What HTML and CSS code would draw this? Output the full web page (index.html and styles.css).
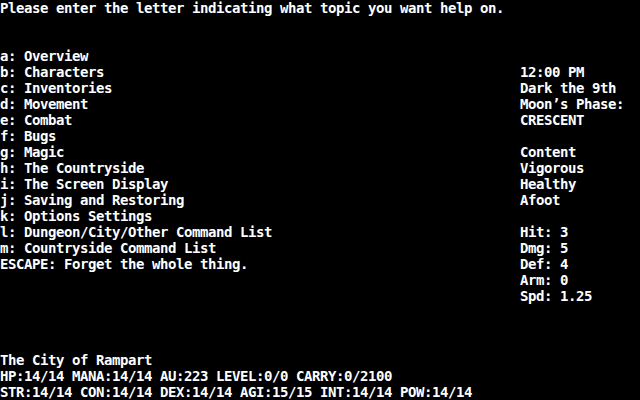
FILE: index.html
```html
<!DOCTYPE html>
<html>
<head>
    <title>Help</title>
    <meta charset="utf-8">
    <link rel="stylesheet" href="styles.css">
</head>
<body>
<div class="screen">
    <div class="line">Please enter the letter indicating what topic you want help on.</div>
    <div class="line"></div>
    <div class="line"></div>

    <div class="middle">
        <div class="menu">
            <div class="line">a: Overview</div>
            <div class="line">b: Characters</div>
            <div class="line">c: Inventories</div>
            <div class="line">d: Movement</div>
            <div class="line">e: Combat</div>
            <div class="line">f: Bugs</div>
            <div class="line">g: Magic</div>
            <div class="line">h: The Countryside</div>
            <div class="line">i: The Screen Display</div>
            <div class="line">j: Saving and Restoring</div>
            <div class="line">k: Options Settings</div>
            <div class="line">l: Dungeon/City/Other Command List</div>
            <div class="line">m: Countryside Command List</div>
            <div class="line">ESCAPE: Forget the whole thing.</div>
        </div>
        <div class="side">
            <div class="line"></div>
            <div class="line">12:00 PM</div>
            <div class="line">Dark the 9th</div>
            <div class="line">Moon&rsquo;s Phase:</div>
            <div class="line">CRESCENT</div>
            <div class="line"></div>
            <div class="line">Content</div>
            <div class="line">Vigorous</div>
            <div class="line">Healthy</div>
            <div class="line">Afoot</div>
            <div class="line"></div>
            <div class="line">Hit: 3</div>
            <div class="line">Dmg: 5</div>
            <div class="line">Def: 4</div>
            <div class="line">Arm: 0</div>
            <div class="line">Spd: 1.25</div>
        </div>
    </div>

    <div class="status">
        <div class="line">The City of Rampart</div>
        <div class="line">HP:14/14 MANA:14/14 AU:223 LEVEL:0/0 CARRY:0/2100</div>
        <div class="line">STR:14/14 CON:14/14 DEX:14/14 AGI:15/15 INT:14/14 POW:14/14</div>
    </div>
</div>
</body>
</html>
```
FILE: styles.css
```css
html, body {
    margin: 0;
    background: #000;
}

/* 80x25 text screen, 8x16 cells */
.screen {
    width: 640px;
    height: 400px;
    display: flex;
    flex-direction: column;
    color: #fff;
    font-family: "DejaVu Sans Mono", "Liberation Mono", monospace;
    font-weight: bold;
    font-size: 14px;
    letter-spacing: -0.43px;
    line-height: 16px;
}

.line {
    height: 16px;
    white-space: pre;
}

.middle {
    display: flex;
    flex: 1;
}

.menu {
    width: 520px;
}

.side {
    flex: 1;
}
```
